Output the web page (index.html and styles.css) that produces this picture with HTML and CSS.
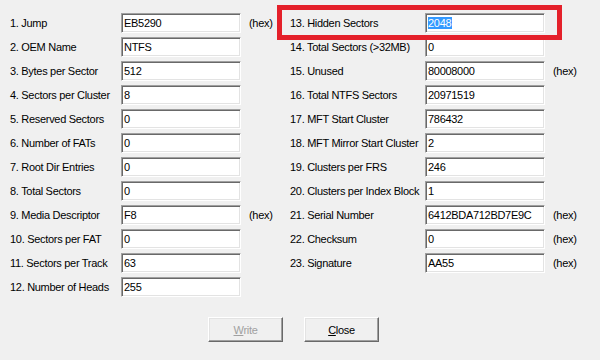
FILE: index.html
```html
<!DOCTYPE html>
<html lang="en">
<head>
  <meta charset="UTF-8" />
  <title>Boot Sector</title>
  <link rel="stylesheet" href="styles.css">
</head>
<body>
  <div class="form">
    <div class="col col-left">
      <div class="lbl">1. Jump</div><div class="field">EB5290</div><div class="hex">(hex)</div>
      <div class="lbl">2. OEM Name</div><div class="field">NTFS</div><div class="hex"></div>
      <div class="lbl">3. Bytes per Sector</div><div class="field">512</div><div class="hex"></div>
      <div class="lbl">4. Sectors per Cluster</div><div class="field">8</div><div class="hex"></div>
      <div class="lbl">5. Reserved Sectors</div><div class="field">0</div><div class="hex"></div>
      <div class="lbl">6. Number of FATs</div><div class="field">0</div><div class="hex"></div>
      <div class="lbl">7. Root Dir Entries</div><div class="field">0</div><div class="hex"></div>
      <div class="lbl">8. Total Sectors</div><div class="field">0</div><div class="hex"></div>
      <div class="lbl">9. Media Descriptor</div><div class="field">F8</div><div class="hex">(hex)</div>
      <div class="lbl">10. Sectors per FAT</div><div class="field">0</div><div class="hex"></div>
      <div class="lbl">11. Sectors per Track</div><div class="field">63</div><div class="hex"></div>
      <div class="lbl">12. Number of Heads</div><div class="field">255</div><div class="hex"></div>
    </div>
    <div class="col col-right">
      <div class="lbl">13. Hidden Sectors</div><div class="field"><span class="sel">2048</span></div><div class="hex"></div>
      <div class="lbl">14. Total Sectors (&gt;32MB)</div><div class="field">0</div><div class="hex"></div>
      <div class="lbl">15. Unused</div><div class="field">80008000</div><div class="hex">(hex)</div>
      <div class="lbl">16. Total NTFS Sectors</div><div class="field">20971519</div><div class="hex"></div>
      <div class="lbl">17. MFT Start Cluster</div><div class="field">786432</div><div class="hex"></div>
      <div class="lbl">18. MFT Mirror Start Cluster</div><div class="field">2</div><div class="hex"></div>
      <div class="lbl">19. Clusters per FRS</div><div class="field">246</div><div class="hex"></div>
      <div class="lbl">20. Clusters per Index Block</div><div class="field">1</div><div class="hex"></div>
      <div class="lbl">21. Serial Number</div><div class="field">6412BDA712BD7E9C</div><div class="hex">(hex)</div>
      <div class="lbl">22. Checksum</div><div class="field">0</div><div class="hex">(hex)</div>
      <div class="lbl">23. Signature</div><div class="field">AA55</div><div class="hex">(hex)</div>
    </div>
  </div>

  <div class="buttons">
    <button class="btn" disabled><u>W</u>rite</button>
    <button class="btn"><u>C</u>lose</button>
  </div>

  <!-- annotation around the hidden sectors field -->
  <div class="highlight"></div>
</body>
</html>
```

FILE: styles.css
```css
body { margin: 0; padding: 13px 0 0 10px; background: #f0f0f0; color: #000; font-family: "Liberation Sans", Arial, sans-serif; font-size: 11px; letter-spacing: -0.3px; width: 590px; height: 347px; overflow: hidden; }
.form { display: flex; }
.col { display: grid; row-gap: 4px; grid-auto-rows: 20px; align-items: center; }
.col-left { grid-template-columns: 111px 120px 41px; width: 280px; }
.col-right { grid-template-columns: 135px 120px 40px; }
.lbl { white-space: nowrap; }
.hex { padding-left: 8px; white-space: nowrap; }
.field { box-sizing: border-box; height: 20px; padding: 2px 0 0 2px; background: #fff; border: 1px solid; border-color: #a0a0a0 #fff #fff #a0a0a0; box-shadow: inset 1px 1px #696969, inset -1px -1px #e3e3e3; white-space: nowrap; line-height: 14px; }
.sel { background: #3399ff; color: #fff; padding: 0 1px 0 0; }
.buttons { display: flex; gap: 21px; margin: 20px 0 0 198px; }
.btn { box-sizing: border-box; width: 75px; height: 25px; padding: 0; background: #f0f0f0; color: #000; font: inherit; letter-spacing: inherit; border: 1px solid; border-color: #fff #696969 #696969 #fff; box-shadow: inset -1px -1px #a0a0a0, inset 1px 1px #e3e3e3; }
.btn:disabled { color: #a0a0a0; }
.highlight { position: absolute; left: 277px; top: 5px; width: 275px; height: 25px; border: 5px solid #e4202a; }
```
